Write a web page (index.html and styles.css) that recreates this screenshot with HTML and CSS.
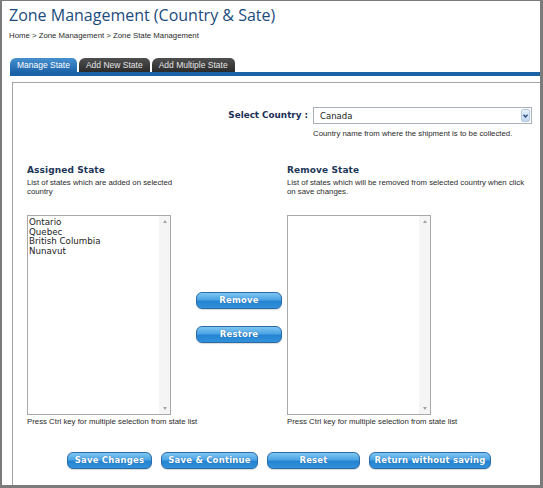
FILE: index.html
```html
<!DOCTYPE html>
<html lang="en">
<head>
    <meta charset="UTF-8">
    <title>Zone Management</title>
    <link rel="stylesheet" href="styles.css">
</head>
<body>
    <div class="frame">
        <h1 class="page-title">Zone Management (Country &amp; Sate)</h1>
        <div class="breadcrumb">Home &gt; Zone Management &gt; Zone State Management</div>
        <ul class="tabs">
            <li class="tab active">Manage State</li>
            <li class="tab">Add New State</li>
            <li class="tab">Add Multiple State</li>
        </ul>
        <div class="tab-line"></div>
        <div class="panel">
            <div class="country-row">
                <label class="country-label">Select Country :</label>
                <div class="country-field">
                    <div class="dropdown">
                        <span class="dropdown-value">Canada</span>
                        <span class="dropdown-arrow">
                            <svg width="5" height="4" viewBox="0 0 5 4"><path d="M0.5 0.7 L2.5 3 L4.5 0.7" fill="none" stroke="#24467a" stroke-width="1.3"/></svg>
                        </span>
                    </div>
                    <p class="hint">Country name from where the shipment is to be collected.</p>
                </div>
            </div>

            <div class="state-grid">
                <div class="col-head">
                    <h2>Assigned State</h2>
                    <p class="hint">List of states which are added on selected<br>country</p>
                </div>
                <div></div>
                <div class="col-head">
                    <h2>Remove State</h2>
                    <p class="hint">List of states which will be removed from selected country when click<br>on save changes.</p>
                </div>

                <div class="listbox">
                    <ul class="listbox-items">
                        <li>Ontario</li>
                        <li>Quebec</li>
                        <li>British Columbia</li>
                        <li>Nunavut</li>
                    </ul>
                    <div class="scroll"><span class="arrow up"></span><span class="arrow down"></span></div>
                </div>
                <div class="move-buttons">
                    <button class="btn btn-move">Remove</button>
                    <button class="btn btn-move">Restore</button>
                </div>
                <div class="listbox">
                    <ul class="listbox-items"></ul>
                    <div class="scroll"><span class="arrow up"></span><span class="arrow down"></span></div>
                </div>

                <p class="hint note">Press Ctrl key for multiple selection from state list</p>
                <div></div>
                <p class="hint note">Press Ctrl key for multiple selection from state list</p>
            </div>

            <div class="actions">
                <button class="btn btn-save">Save Changes</button>
                <button class="btn btn-continue">Save &amp; Continue</button>
                <button class="btn btn-reset">Reset</button>
                <button class="btn btn-return">Return without saving</button>
            </div>
        </div>
    </div>
</body>
</html>
```

FILE: styles.css
```css
body {
    margin: 0;
    font-family: "Liberation Sans", Arial, sans-serif;
    background-color: #fff;
}
.frame {
    height: 488px;
    box-sizing: border-box;
    border: 2px solid #7b7b7b;
    border-top-width: 1px;
    border-right-width: 3px;
    border-bottom-width: 3px;
    display: flex;
    flex-direction: column;
}
.page-title {
    margin: 4px 0 0 7px;
    font: normal 16px/20px "Open Sans", sans-serif;
    color: #1b4c7d;
}
.breadcrumb {
    margin: 6px 0 0 7px;
    font-size: 7.8px;
    line-height: 9px;
    color: #2a2a2a;
}

/* tabs */
.tabs {
    list-style: none;
    margin: 18px 0 0 8px;
    padding: 0;
    display: flex;
    gap: 2px;
}
.tab {
    height: 14px;
    line-height: 15px;
    padding: 0 7px;
    font-size: 8.5px;
    color: #e4e4e4;
    background: linear-gradient(#4f4f4f, #2b2b2b);
    border-radius: 6px 5px 0 0;
}
.tab.active {
    background: linear-gradient(#4790cf, #1d65a9);
    color: #fff;
}
.tab-line {
    height: 4px;
    margin-left: 8px;
    background-color: #1b63a6;
}
.panel {
    flex: 1;
    margin: 6px 0 0 10px;
    border-top: 1px solid #a3a3a3;
    border-left: 1px solid #a3a3a3;
    padding: 24px 0 0 14px;
}

/* country select */
.country-row {
    display: flex;
    justify-content: flex-end;
    gap: 5px;
    padding-right: 8px;
}
.country-label {
    font: bold 8.8px/17px "DejaVu Sans", Verdana, sans-serif;
    color: #1b2f58;
}
.dropdown {
    width: 219px;
    height: 17px;
    box-sizing: border-box;
    border: 1px solid #a9b0b8;
    display: flex;
    align-items: center;
    justify-content: space-between;
    padding: 0 1px 0 6px;
}
.dropdown-value {
    font: 8.5px "DejaVu Sans", Verdana, sans-serif;
    color: #222;
}
.dropdown-arrow {
    width: 9px;
    height: 13px;
    box-sizing: border-box;
    border: 1px solid #b7cbe4;
    border-radius: 2px;
    background: linear-gradient(#e6f0fb, #c3d8f1);
    display: flex;
    align-items: center;
    justify-content: center;
}
.hint {
    margin: 0;
    font-size: 7.8px;
    line-height: 9px;
    color: #2a2a2a;
    white-space: nowrap;
}
.country-field .hint {
    margin-top: 5px;
}

/* state lists */
.state-grid {
    display: grid;
    grid-template-columns: 169px 91px 1fr;
    margin-top: 27px;
}
.col-head {
    padding-bottom: 19px;
}
.col-head h2 {
    margin: 0;
    font: bold 9px/11px "DejaVu Sans", Verdana, sans-serif;
    letter-spacing: 0.1px;
    color: #1d3656;
}
.col-head .hint {
    margin-top: 2px;
}
.listbox {
    width: 144px;
    height: 200px;
    box-sizing: border-box;
    border: 1px solid #a9a9a9;
    display: flex;
}
.listbox-items {
    flex: 1;
    list-style: none;
    margin: 0;
    padding: 2px 1px;
    font: 8.7px/9.7px "DejaVu Sans", Verdana, sans-serif;
    color: #222;
}
.scroll {
    width: 11px;
    background-color: #f5f5f5;
    display: flex;
    flex-direction: column;
    justify-content: space-between;
    align-items: center;
    padding: 4px 0;
}
.arrow {
    width: 0;
    height: 0;
    border-left: 2.5px solid transparent;
    border-right: 2.5px solid transparent;
}
.arrow.up {
    border-bottom: 3px solid #a3a3a3;
}
.arrow.down {
    border-top: 3px solid #a3a3a3;
}
.note {
    margin-top: 2px;
}
.move-buttons {
    display: flex;
    flex-direction: column;
    gap: 17px;
    margin-top: 77px;
}

/* blue buttons */
.btn {
    height: 17px;
    padding: 0;
    border: 1px solid #2a6aa6;
    border-radius: 6px;
    background: linear-gradient(#80c6f3, #4ba4e4 45%, #2584d2 55%, #3191da);
    color: #fff;
    font: bold 8.5px/15px "DejaVu Sans", Verdana, sans-serif;
    letter-spacing: 0.2px;
    text-shadow: 0 0 1px rgba(0, 40, 90, 0.5);
    box-shadow: 0 1px 1px rgba(0, 0, 0, 0.15);
}
.btn-move {
    width: 86px;
}
.actions {
    display: flex;
    justify-content: center;
    gap: 9px;
    margin-top: 26px;
    padding-right: 9px;
}
.btn-save {
    width: 85px;
}
.btn-continue {
    width: 97px;
}
.btn-reset {
    width: 93px;
}
.btn-return {
    width: 122px;
}
```
